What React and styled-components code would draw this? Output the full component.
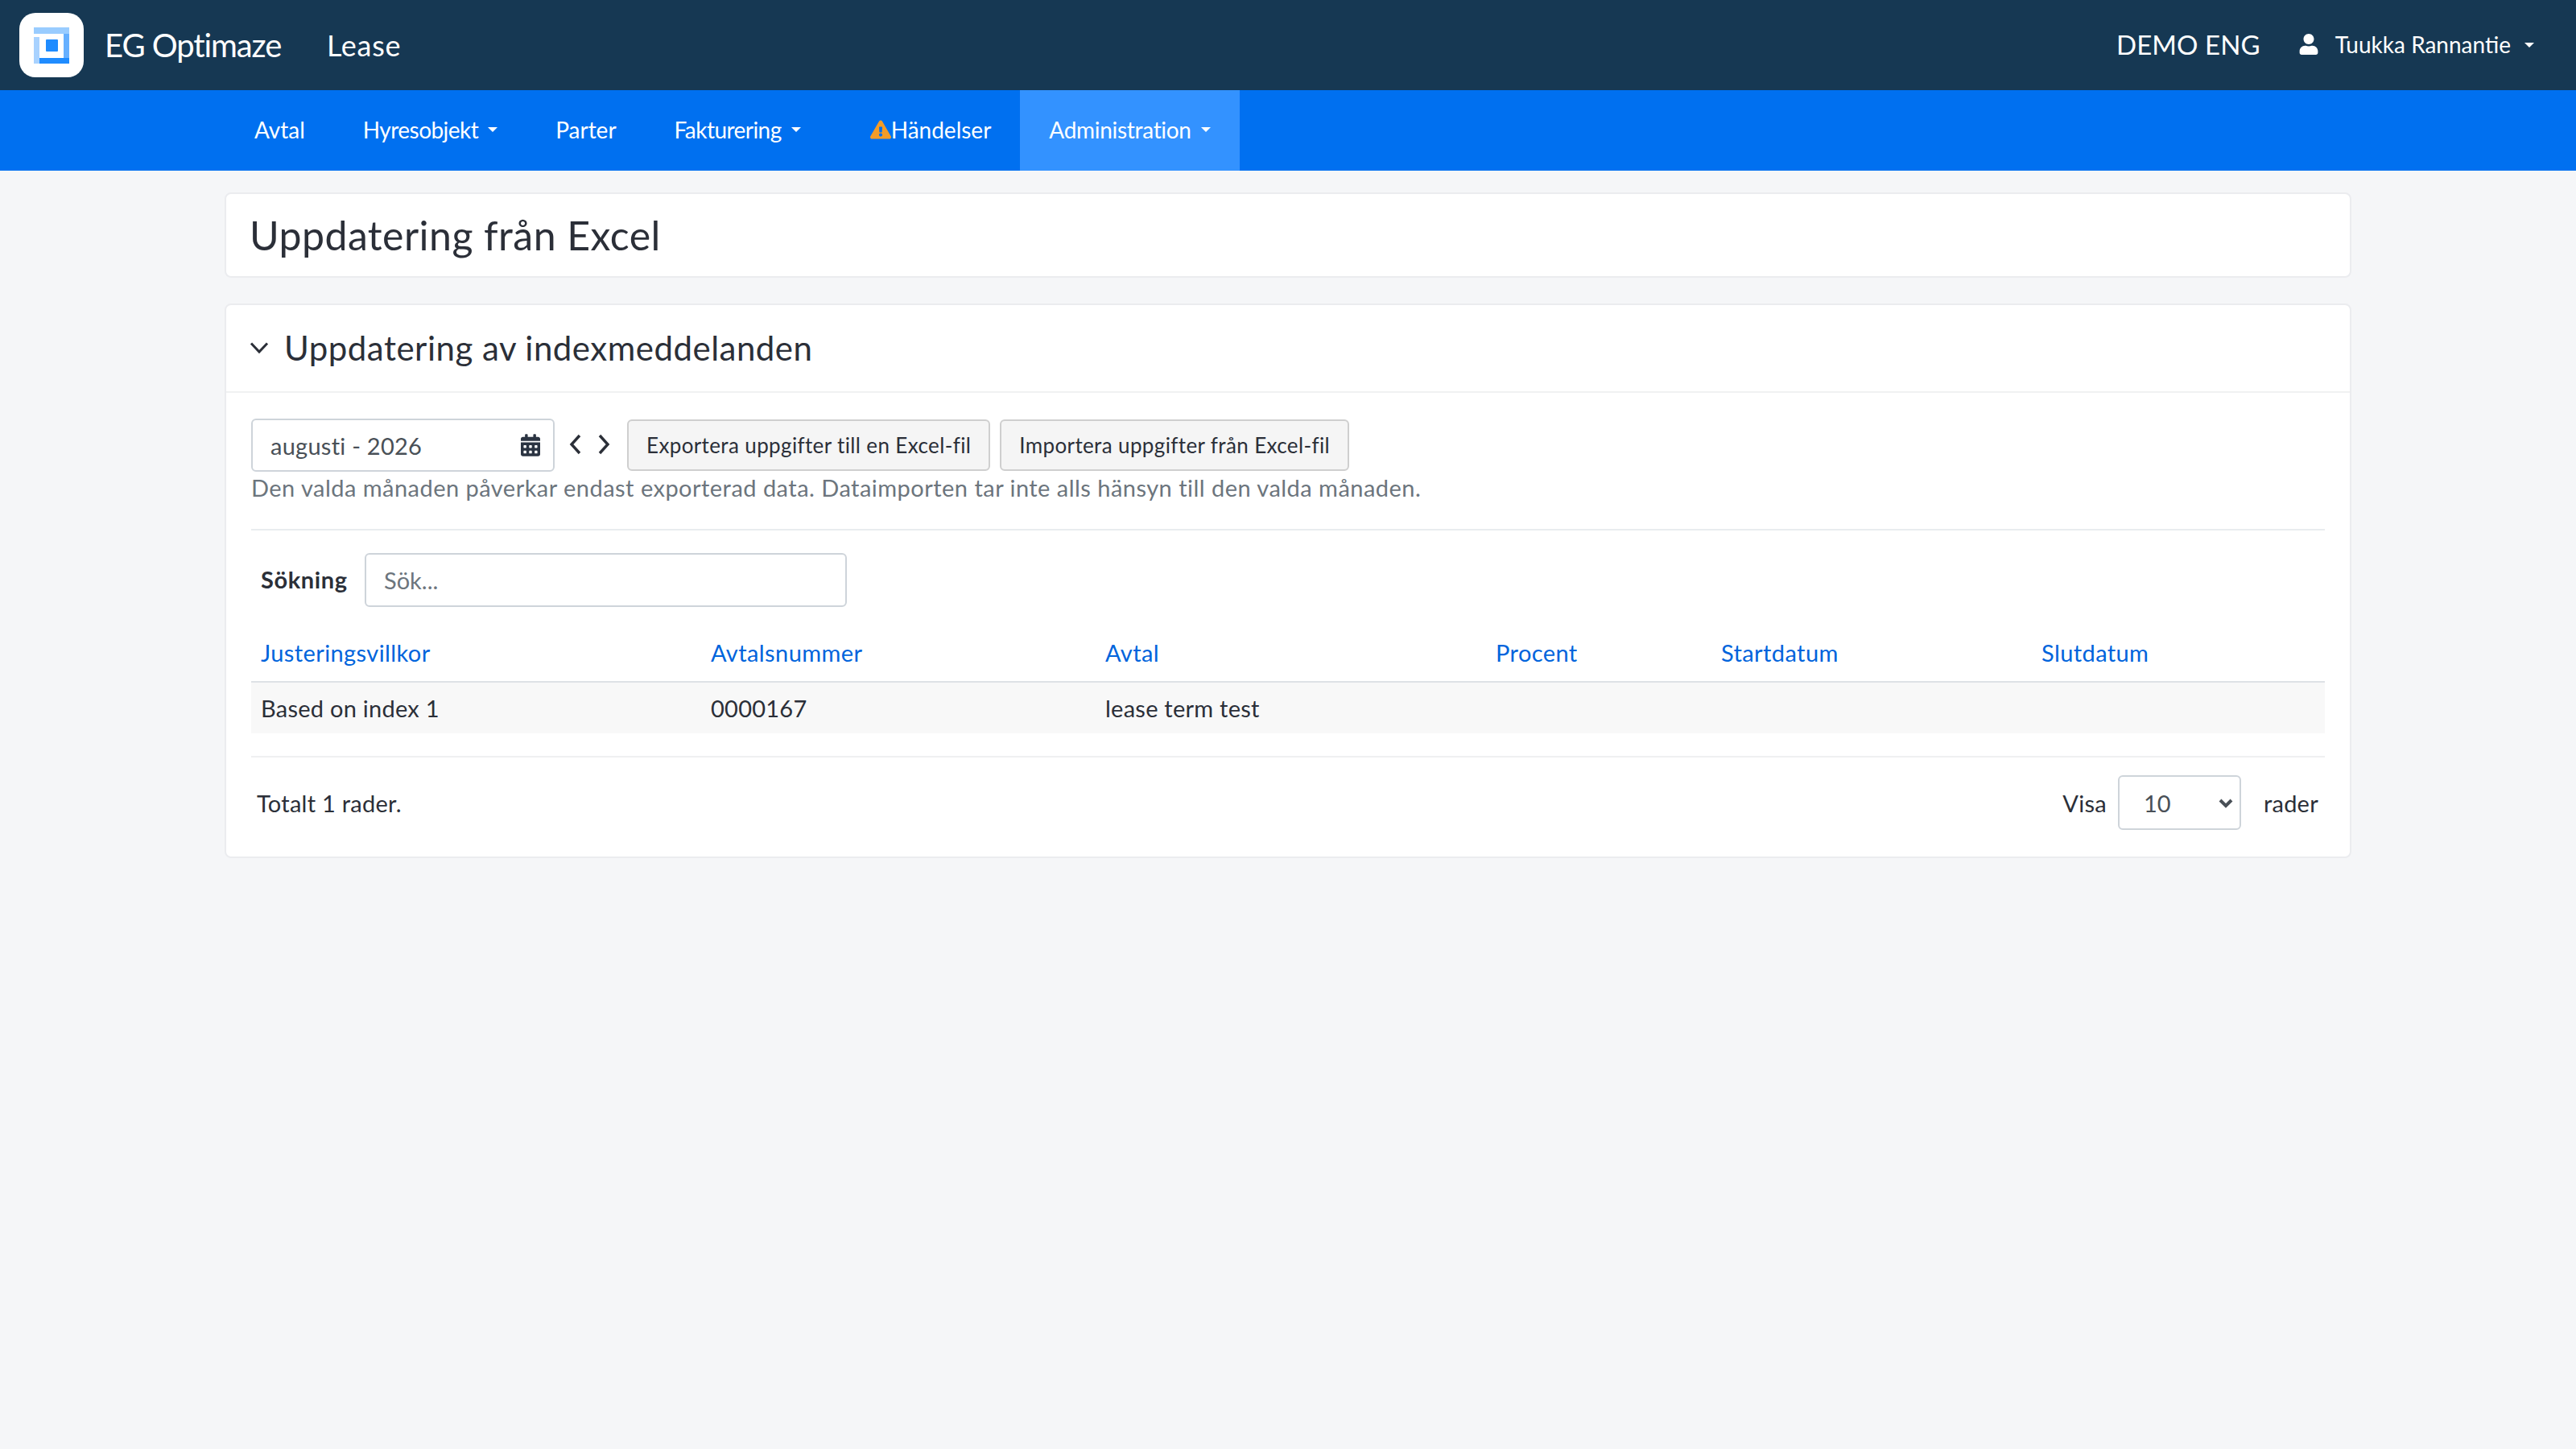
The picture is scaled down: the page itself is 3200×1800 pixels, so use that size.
import React from "react";
import styled, { createGlobalStyle } from "styled-components";
import { FaCalendarAlt, FaUser, FaExclamationTriangle } from "react-icons/fa";

const Global = createGlobalStyle`
  html, body { margin: 0; padding: 0; background: #f5f6f8; }
  body { font-family: "Lato", "Noto Sans", sans-serif; font-size: 29px; letter-spacing: .25px; color: #2b2f38; }
  * { box-sizing: border-box; }
`;
const selectChevron = `url("data:image/svg+xml,%3Csvg xmlns='http://www.w3.org/2000/svg' width='18' height='13' viewBox='0 0 18 13'%3E%3Cpath d='M2 3l7 7 7-7' fill='none' stroke='%23495057' stroke-width='4'/%3E%3C/svg%3E")`;
const Page = styled.div`min-height: 1800px; background: #f5f6f8;`;
const TopBar = styled.header`height: 112px; background: #163853; color: #fff; display: flex; align-items: center; padding: 0 52px 0 24px;`;
const LogoBox = styled.div`width: 80px; height: 80px; border-radius: 20px; background: #fff; display: flex; align-items: center; justify-content: center;`;
const Brand = styled.span`margin-left: 26px; font-size: 40px; letter-spacing: -1.1px; width: 276px; white-space: nowrap;`;
const Product = styled.span`font-size: 36px; letter-spacing: .7px;`;
const Spacer = styled.div`flex: 1;`;
const Tenant = styled.span`font-size: 33px; letter-spacing: .1px; margin-right: 48px; margin-top: -2px;`;
const UserIcon = styled(FaUser)`width: 24px; height: 26px; margin-right: 21px; margin-top: -2px;`;
const UserName = styled.span`font-size: 28px; letter-spacing: 0; margin-top: -3px;`;
const Caret = styled.i`display: inline-block; width: 0; height: 0; margin-left: ${p => p.$gap || 12}px; border-left: 6px solid transparent; border-right: 6px solid transparent; border-top: 6px solid #fff;`;
const NavBar = styled.nav`height: 100px; background: #0070f0; display: flex; padding-left: 280px;`;
const NavItem = styled.a`display: flex; align-items: center; padding: 0 36px 3px ${p => p.$wide ? 50 : 36}px; height: 100px; color: #fff; font-size: 28px; letter-spacing: ${p => p.$track || 0}px; white-space: nowrap; background: ${p => p.$active ? "#3392ff" : "transparent"};`;
const Warn = styled(FaExclamationTriangle)`width: 26px; height: 24px; color: #f39c28;`;
const Main = styled.main`padding: 27px 279px 0 279px; display: flex; flex-direction: column; gap: 32px;`;
const Card = styled.section`background: #fff; border: 2px solid #ebecef; border-radius: 8px;`;
const TitleCard = styled(Card)`height: 106px; display: flex; align-items: center; padding: 0 29px;`;
const Title = styled.h1`margin: 0; font-size: 50px; letter-spacing: .45px; font-weight: 400; color: #2b2f38;`;
const CardHead = styled.div`height: 109px; display: flex; align-items: center; padding: 0 29px 2px; border-bottom: 2px solid #f0f1f2;`;
const CardTitle = styled.h2`margin: 0 0 0 19px; font-size: 42px; letter-spacing: .5px; font-weight: 400; color: #2b2f38;`;
const CardBody = styled.div`padding: 32px 31px 0;`;
const ToolRow = styled.div`display: flex; align-items: center;`;
const DateBox = styled.div`width: 377px; height: 66px; border: 2px solid #ced4da; border-radius: 6px; display: flex; align-items: center; justify-content: space-between; padding: 0 16px 0 22px; color: #495057;`;
const CalIcon = styled(FaCalendarAlt)`width: 24px; height: 28px; color: #2b3442;`;
const Arrows = styled.div`display: flex; width: 90px; padding: 0 20px 0 17px; justify-content: space-between; margin-top: -2px; color: #2b2f38;`;
const Btn = styled.button`height: 64px; margin-right: 12px; padding: 0 22px; border: 2px solid #cfcfcf; border-radius: 6px; background: #f5f5f5; font: inherit; font-size: 26px; letter-spacing: .37px; color: #2b2f38; white-space: nowrap;`;
const Help = styled.div`color: #6c757d; letter-spacing: .47px; line-height: 40px;`;
const Rule = styled.hr`margin: 31px 0 28px; border: 0; border-top: 2px solid #e9ecef;`;
const SearchRow = styled.div`display: flex; align-items: center; padding-left: 12px;`;
const SearchLabel = styled.label`font-weight: 700; letter-spacing: .6px; width: 129px; margin-top: -2px;`;
const SearchInput = styled.input`width: 599px; height: 67px; border: 2px solid #ced4da; border-radius: 6px; padding: 0 22px; font: inherit; color: #495057; &::placeholder { color: #6c757d; opacity: 1; }`;
const Table = styled.table`width: 100%; margin-top: 17px; border-collapse: collapse; table-layout: fixed;`;
const Th = styled.th`padding: 3px 12px 0; height: 76px; text-align: left; font-weight: 400; letter-spacing: .4px; color: #0064dc; border-bottom: 2px solid #dee2e6;`;
const Td = styled.td`padding: 0 12px; height: 64px; background: #f8f8f8; color: #2b2f38;`;
const Footer = styled.div`margin-top: 28px; border-top: 2px solid #eff0f1; display: flex; align-items: center; justify-content: space-between; padding: 0 8px 11px 7px; height: 125px;`;
const Pager = styled.div`display: flex; align-items: center;`;
const PageSelect = styled.select`appearance: none; width: 153px; height: 68px; margin: 0 28px 0 14px; border: 2px solid #ced4da; border-radius: 6px; background: #fff ${selectChevron} no-repeat right 8px center; color: #495057; font: inherit; padding: 0 30px;`;

const Logo = () => (
  <svg width="44" height="45" viewBox="0 0 44 45">
    <rect x="0" y="0" width="44" height="8" fill="#99ccff" />
    <rect x="37" y="8" width="7" height="30" fill="#66b0ff" />
    <rect x="7" y="38" width="37" height="7" fill="#1f8cff" />
    <rect x="0" y="12" width="7" height="33" fill="#a8d2ff" />
    <rect x="15" y="15" width="15" height="15" rx="1" fill="#1f8cff" />
  </svg>
);
const DownChevron = () => (
  <svg width="24" height="16" viewBox="0 0 24 16">
    <path d="M2 2.5L12 13L22 2.5" fill="none" stroke="#2b2f38" strokeWidth="3" />
  </svg>
);
const SideChevron = ({ d }) => (
  <svg width="18" height="26" viewBox="0 0 18 26">
    <path d={d} fill="none" stroke="currentColor" strokeWidth="3.4" />
  </svg>
);

const columns = [
  ["Justeringsvillkor", 559], ["Avtalsnummer", 490], ["Avtal", 485],
  ["Procent", 280], ["Startdatum", 398], ["Slutdatum", 364],
];

export default function App() {
  return (
    <Page>
      <Global />
      <TopBar>
        <LogoBox><Logo /></LogoBox>
        <Brand>EG Optimaze</Brand>
        <Product>Lease</Product>
        <Spacer />
        <Tenant>DEMO ENG</Tenant>
        <UserIcon />
        <UserName>Tuukka Rannantie</UserName>
        <Caret $gap={17} />
      </TopBar>
      <NavBar>
        <NavItem>Avtal</NavItem>
        <NavItem $track={-0.55}>Hyresobjekt<Caret /></NavItem>
        <NavItem>Parter</NavItem>
        <NavItem $track={-0.55}>Fakturering<Caret /></NavItem>
        <NavItem $wide><Warn />Händelser</NavItem>
        <NavItem $active $track={-0.3}>Administration<Caret /></NavItem>
      </NavBar>
      <Main>
        <TitleCard><Title>Uppdatering från Excel</Title></TitleCard>
        <Card>
          <CardHead><DownChevron /><CardTitle>Uppdatering av indexmeddelanden</CardTitle></CardHead>
          <CardBody>
            <ToolRow>
              <DateBox>augusti - 2026<CalIcon /></DateBox>
              <Arrows>
                <SideChevron d="M14 2L4 13L14 24" />
                <SideChevron d="M4 2L14 13L4 24" />
              </Arrows>
              <Btn>Exportera uppgifter till en Excel-fil</Btn>
              <Btn>Importera uppgifter från Excel-fil</Btn>
            </ToolRow>
            <Help>Den valda månaden påverkar endast exporterad data. Dataimporten tar inte alls hänsyn till den valda månaden.</Help>
            <Rule />
            <SearchRow>
              <SearchLabel>Sökning</SearchLabel>
              <SearchInput placeholder="Sök..." />
            </SearchRow>
            <Table>
              <colgroup>{columns.map(([n, w]) => <col key={n} width={w} />)}</colgroup>
              <thead><tr>{columns.map(([n]) => <Th key={n}>{n}</Th>)}</tr></thead>
              <tbody><tr><Td>Based on index 1</Td><Td>0000167</Td><Td>lease term test</Td><Td /><Td /><Td /></tr></tbody>
            </Table>
            <Footer>
              <span>Totalt 1 rader.</span>
              <Pager>Visa<PageSelect defaultValue="10"><option>10</option><option>25</option></PageSelect>rader</Pager>
            </Footer>
          </CardBody>
        </Card>
      </Main>
    </Page>
  );
}
